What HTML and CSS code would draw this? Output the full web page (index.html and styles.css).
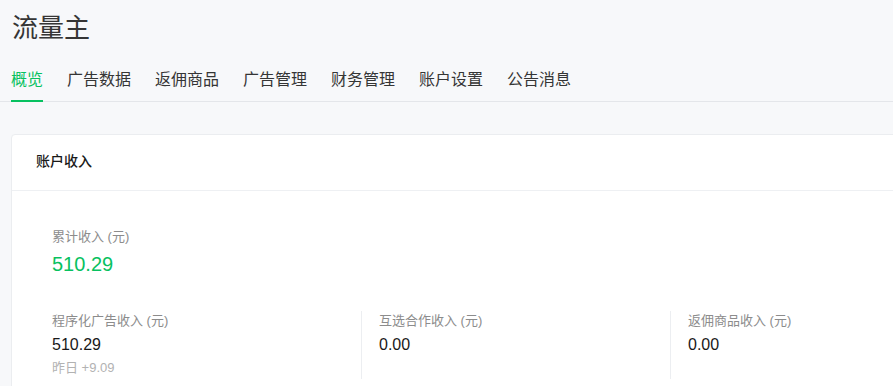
FILE: index.html
```html
<!DOCTYPE html>
<html lang="zh-CN">
<head>
<meta charset="utf-8">
<title>流量主</title>
<link rel="stylesheet" href="styles.css">
</head>
<body>
<div class="page">
  <h1 class="title">流量主</h1>
  <nav class="tabs">
    <a class="tab active">概览</a>
    <a class="tab">广告数据</a>
    <a class="tab">返佣商品</a>
    <a class="tab">广告管理</a>
    <a class="tab">财务管理</a>
    <a class="tab">账户设置</a>
    <a class="tab">公告消息</a>
  </nav>
  <section class="card">
    <header class="card-head">账户收入</header>
    <div class="card-body">
      <div class="total">
        <div class="label">累计收入 (元)</div>
        <div class="total-value">510.29</div>
      </div>
      <div class="stats">
        <div class="stat">
          <div class="label">程序化广告收入 (元)</div>
          <div class="value">510.29</div>
          <div class="sub">昨日 +9.09</div>
        </div>
        <div class="stat">
          <div class="label">互选合作收入 (元)</div>
          <div class="value">0.00</div>
        </div>
        <div class="stat">
          <div class="label">返佣商品收入 (元)</div>
          <div class="value">0.00</div>
        </div>
      </div>
    </div>
  </section>
</div>
</body>
</html>
```

FILE: styles.css
```css
html, body {
  margin: 0;
  padding: 0;
  background: #f7f8fa;
  overflow: hidden;
}
body {
  font-family: "Liberation Sans", "Noto Sans CJK SC", sans-serif;
  color: #353535;
}
.page {
  width: 1020px;
  padding-top: 10px;
}
.title {
  margin: 0 0 22px 12px;
  font-size: 26px;
  line-height: 36px;
  font-weight: 400;
  color: #353535;
}
.tabs {
  display: flex;
  border-bottom: 1px solid #e4e6ea;
  padding-left: 11px;
  width: 882px;
}
.tab {
  font-size: 16px;
  line-height: 24px;
  padding-bottom: 8px;
  margin-right: 24px;
  margin-bottom: -1px;
  border-bottom: 2px solid transparent;
  color: #353535;
  cursor: pointer;
}
.tab.active {
  color: #07c160;
  border-bottom-color: #07c160;
}
.card {
  margin: 32px 0 0 11px;
  background: #fff;
  border: 1px solid #ebedf0;
  border-radius: 4px;
}
.card-head {
  padding: 16px 24px 19px;
  font-size: 14px;
  line-height: 20px;
  font-weight: 500;
  color: #191919;
  border-bottom: 1px solid #eef0f3;
}
.card-body {
  padding: 36px 40px 20px;
}
.label {
  font-size: 13px;
  line-height: 20px;
  color: #8c8c8c;
}
.total-value {
  margin-top: 4px;
  font-size: 20px;
  line-height: 26px;
  color: #07c160;
}
.stats {
  display: grid;
  grid-template-columns: repeat(3, 1fr);
  margin-top: 34px;
}
.stat {
  height: 68px;
}
.stat + .stat {
  border-left: 1px solid #eceef1;
  padding-left: 17px;
}
.value {
  margin-top: 2px;
  font-size: 16px;
  line-height: 24px;
  color: #191919;
}
.sub {
  margin-top: 1px;
  font-size: 13px;
  line-height: 20px;
  color: #b2b2b2;
}
```
